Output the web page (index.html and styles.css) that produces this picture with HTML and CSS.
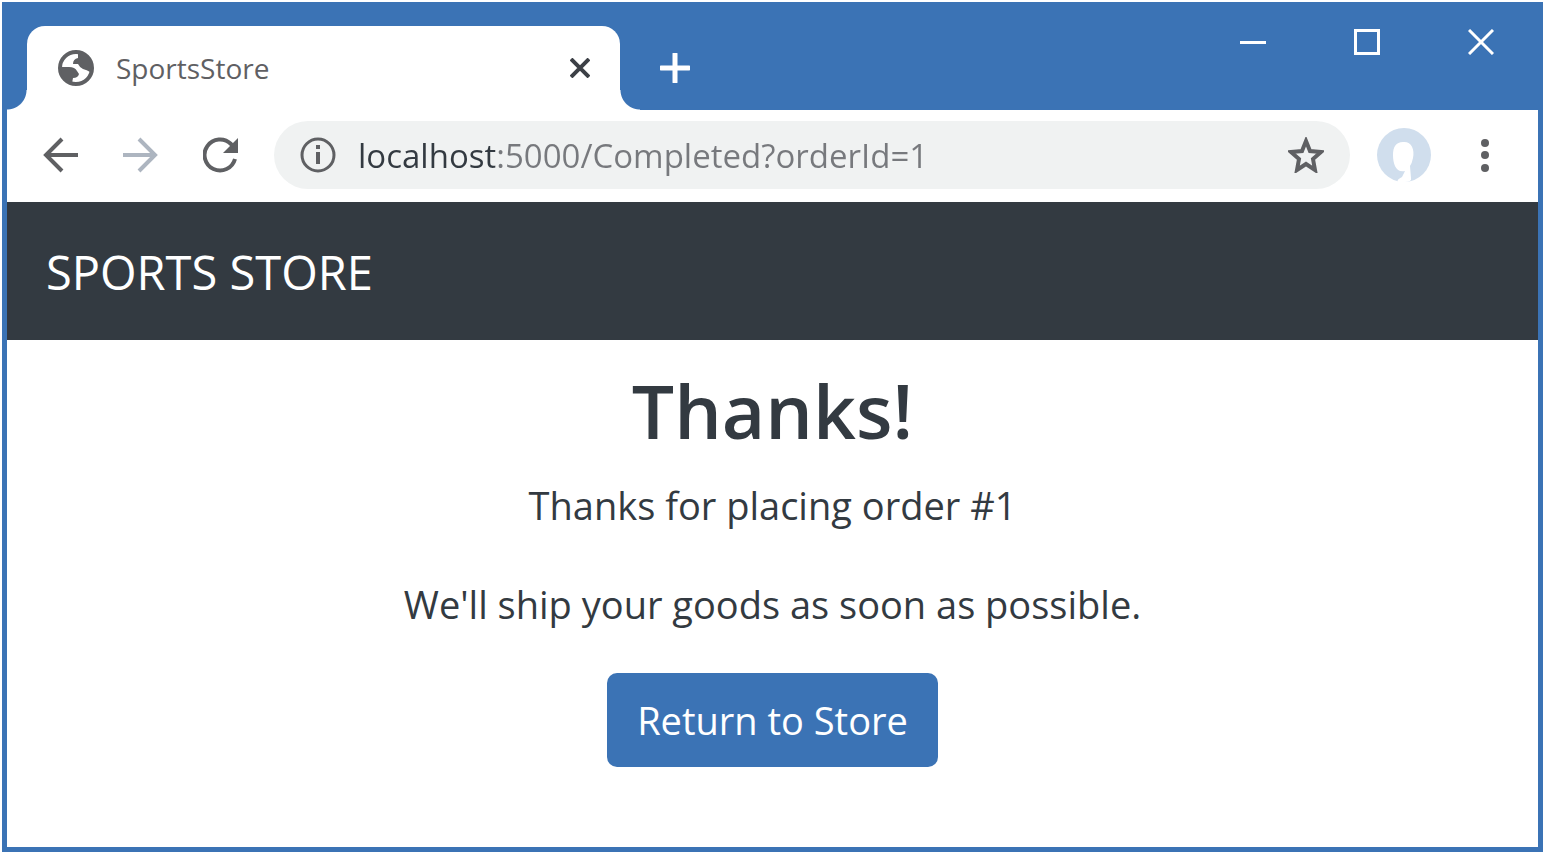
FILE: index.html
```html
<!DOCTYPE html>
<html lang="en">
<head>
<meta charset="utf-8">
<title>SportsStore</title>
<link rel="stylesheet" href="styles.css">
</head>
<body>
<div class="window">
  <header class="titlebar">
    <div class="tab">
      <svg class="tab-icon" viewBox="0 0 36 36" aria-hidden="true">
        <circle cx="18" cy="18" r="16" fill="none" stroke="#5f6063" stroke-width="4"/>
        <path fill="#5f6063" d="M2 17H11Q17 17 19 21L21 24Q20 28 15 28L14 33Q5 31 2 17ZM20 2Q32 4 34 18L32 22Q29 20 25 19Q22 18 20 14L15 14Q15 9 20 8Z"/>
      </svg>
      <span class="tab-title">SportsStore</span>
      <button class="tab-close" type="button" aria-label="Close tab">
        <svg viewBox="0 0 20 20"><path d="M1 1 19 19M19 1 1 19" fill="none" stroke="#3c4046" stroke-width="4"/></svg>
      </button>
    </div>
    <button class="tab-new" type="button" aria-label="New tab">
      <svg viewBox="0 0 30 30"><path d="M15 1V29M1 15H29" fill="none" stroke="#fff" stroke-width="5" stroke-linecap="round"/></svg>
    </button>
    <div class="controls">
      <button type="button" aria-label="Minimize"><svg viewBox="0 0 26 26"><path d="M0 13.500H26" fill="none" stroke="#fff" stroke-width="3"/></svg></button>
      <button type="button" aria-label="Maximize"><svg viewBox="0 0 26 26"><path d="M1.500 1.500H24.500V24.500H1.500Z" fill="none" stroke="#fff" stroke-width="3"/></svg></button>
      <button type="button" aria-label="Close"><svg viewBox="0 0 26 26"><path d="M1 1 25 25M25 1 1 25" fill="none" stroke="#fff" stroke-width="3"/></svg></button>
    </div>
  </header>
  <div class="toolbar">
    <nav class="nav-buttons" aria-label="History">
      <button type="button" aria-label="Back"><svg viewBox="0 0 36 36"><path d="M35 18H3M19 2 3 18 19 34" fill="none" stroke="#5f6063" stroke-width="4"/></svg></button>
      <button type="button" aria-label="Forward"><svg viewBox="0 0 36 36"><path d="M0 18H32M16 2 32 18 16 34" fill="none" stroke="#adb5c0" stroke-width="4"/></svg></button>
      <button type="button" aria-label="Reload"><svg viewBox="0 0 36 36"><path d="M32 22A15.500 15.500 0 1 1 28 7L31 11" fill="none" stroke="#5f6063" stroke-width="4"/><path d="M35 1V16H20Z" fill="#5f6063"/></svg></button>
    </nav>
    <div class="address">
      <svg class="info" viewBox="0 0 36 36" aria-hidden="true"><circle cx="18" cy="18" r="16" fill="none" stroke="#5f6063" stroke-width="3"/><path d="M18 15V27M18 8V12" stroke="#5f6063" stroke-width="4"/></svg>
      <input class="url" type="text" aria-label="Address" value="localhost:5000/Completed?orderId=1">
      <button class="star" type="button" aria-label="Bookmark this page"><svg viewBox="0 0 36 36"><path d="M18 4 22 14 33 15 25 22 27 33 18 27 9 33 11 22 3 15 14 14Z" fill="none" stroke="#5f6063" stroke-width="4"/></svg></button>
    </div>
    <button class="avatar" type="button" aria-label="Profile">
      <svg viewBox="0 0 54 54"><circle cx="27" cy="27" r="27" fill="#d0deed"/><path d="M26 14C34 13 38 21 36 30Q35 35 33 38L34 50Q35 54 28 54H21Q19 52 25 49L28 43C19 45 16 36 16 27 16 19 19 14 26 14Z" fill="#fff"/></svg>
    </button>
    <button class="menu" type="button" aria-label="Menu"><svg viewBox="0 0 36 36"><g fill="#5f6063"><circle cx="18" cy="6" r="4"/><circle cx="18" cy="18" r="4"/><circle cx="18" cy="31" r="4"/></g></svg></button>
  </div>
  <div class="navbar"><span class="brand">SPORTS STORE</span></div>
  <main class="content">
    <h1>Thanks!</h1>
    <p>Thanks for placing order #1</p>
    <p>We'll ship your goods as soon as possible.</p>
    <a class="button" href="#">Return to Store</a>
  </main>
</div>
</body>
</html>
```
FILE: styles.css
```css
* {
  box-sizing: border-box;
}

body {
  margin: 0;
  padding: 2px;
  background: #fff;
  color: #333a41;
  font-family: "Open Sans", "Noto Sans", sans-serif;
}

button {
  display: flex;
  align-items: center;
  justify-content: center;
  padding: 0;
  border: 0;
  background: none;
  font: inherit;
}

svg {
  display: block;
  flex: none;
}

.window {
  display: flex;
  flex-direction: column;
  min-height: calc(100vh - 4px);
  border: 5px solid #3b73b5;
  border-top: 0;
  background: #fff;
}

.titlebar {
  display: flex;
  height: 108px;
  padding-left: 20px;
  background: #3b73b5;
}

.tab {
  position: relative;
  display: flex;
  align-items: center;
  width: 593px;
  height: 84px;
  margin-top: 24px;
  padding: 0 30px 0 31px;
  border-radius: 18px 18px 0 0;
  background: #fff;
}

.tab::before,
.tab::after {
  content: "";
  position: absolute;
  bottom: 0;
  width: 20px;
  height: 20px;
}

.tab::before {
  right: 100%;
  background: radial-gradient(circle at 0 0, #3b73b5 19px, #fff 20px);
}

.tab::after {
  left: 100%;
  background: radial-gradient(circle at 100% 0, #3b73b5 19px, #fff 20px);
}

.tab-icon {
  width: 36px;
  height: 36px;
}

.tab-title {
  flex: 1;
  margin-left: 22px;
  color: #5f6063;
  font-size: 28px;
}

.tab-close svg {
  width: 20px;
  height: 20px;
}

.tab-new {
  width: 60px;
  height: 84px;
  margin: 24px 0 0 25px;
}

.tab-new svg {
  width: 30px;
  height: 30px;
}

.controls {
  display: flex;
  margin-left: auto;
}

.controls button {
  width: 114px;
  height: 80px;
}

.controls svg {
  width: 26px;
  height: 26px;
}

.toolbar {
  display: flex;
  align-items: center;
  height: 92px;
  padding: 0 35px 2px 14px;
}

.nav-buttons {
  display: flex;
  margin-right: 13px;
}

.nav-buttons button {
  width: 80px;
  height: 68px;
}

.nav-buttons svg,
.address svg,
.menu svg {
  width: 36px;
  height: 36px;
}

.address {
  display: flex;
  flex: 1;
  align-items: center;
  height: 68px;
  padding: 0 26px;
  border-radius: 34px;
  background: #f0f2f2;
}

.url {
  flex: 1;
  min-width: 0;
  margin: 0 22px;
  padding: 0;
  border: 0;
  outline: 0;
  background: linear-gradient(to right, #333a41 137px, #77797d 137px);
  background-clip: text;
  color: transparent;
  font-family: inherit;
  font-size: 33px;
}

.avatar {
  margin-left: 27px;
}

.avatar svg {
  width: 54px;
  height: 54px;
}

.menu {
  margin-left: 36px;
}

.navbar {
  display: flex;
  align-items: center;
  height: 138px;
  padding: 2px 39px 0;
  background: #333a41;
  color: #fff;
}

.brand {
  font-size: 47px;
}

.content {
  display: flex;
  flex-direction: column;
  align-items: center;
  padding: 20px;
  font-size: 38px;
  line-height: 60px;
  text-align: center;
}

h1 {
  margin: 0 0 15px;
  font-size: 75px;
  font-weight: 600;
  line-height: 100px;
}

p {
  margin: 0 0 39px;
}

.button {
  padding: 17px 30px;
  border-radius: 10px;
  background: #3b73b5;
  color: #fff;
  text-decoration: none;
}
```
